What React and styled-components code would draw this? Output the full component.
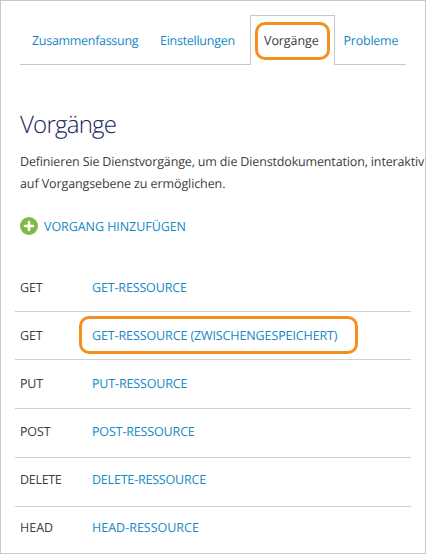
import React from "react";
import styled, { createGlobalStyle } from "styled-components";

const Global = createGlobalStyle`
  * { box-sizing: border-box; }
  body { margin: 0; background: #fff; overflow: hidden; }
`;

const Page = styled.main`
  width: 426px;
  height: 554px;
  overflow: hidden;
  border: 1px solid #c8c8c8;
  font: 12.5px/20px "Open Sans", sans-serif;
  text-rendering: geometricPrecision;
  color: #3c3c3c;
  white-space: nowrap;
`;

const Tabs = styled.nav`
  display: flex;
  height: 50px;
  margin: 14px 19px 0;
`;

const Tab = styled.a`
  flex: 0 0 ${(p) => p.$w}px;
  padding-left: ${(p) => p.$pad}px;
  line-height: 52px;
  color: #1488c6;
  border-bottom: 1px solid #c8c8c8;
`;

const ActiveTab = styled.a`
  display: flex;
  flex: 0 0 85px;
  padding: 6px 0 0 4px;
  border: 1px solid #c8c8c8;
  border-bottom: 0;
`;

const Spaced = styled.span`
  letter-spacing: ${(p) => p.$ls || 0}px;
`;

const TabHighlight = styled.span`
  width: 75px;
  height: 38px;
  padding-left: 6px;
  line-height: 32px;
  border: 3px solid #f68e1f;
  border-radius: 10px;
`;

const Content = styled.section`
  padding: 44px 0 0 19px;
`;

const Title = styled.h1`
  margin: 0;
  font-size: 24px;
  line-height: 32px;
  font-weight: 300;
  letter-spacing: -0.75px;
  color: #14265c;
`;

const Intro = styled.p`
  margin: 10px 0 0;
  line-height: 22px;
`;

const AddLink = styled.a`
  display: flex;
  align-items: center;
  gap: 6px;
  height: 20px;
  margin-top: 22px;
  color: #1488c6;
`;

const List = styled.ul`
  list-style: none;
  margin: 27px 14px 0;
  padding: 0;
`;

const Row = styled.li`
  display: flex;
  height: ${(p) => p.$h}px;
  padding: ${(p) => p.$top}px 0 0 5px;
  border-bottom: 1px solid #d0d0d0;
  &:last-child { border-bottom: 0; }
`;

const Method = styled.span`
  width: 72px;
  letter-spacing: ${(p) => p.$ls}px;
`;

const Link = styled.a`
  color: #1488c6;
  letter-spacing: ${(p) => p.$ls}px;
`;

const HighlightedLink = styled(Link)`
  width: 279px;
  height: 38px;
  margin: -10px 0 0 -13px;
  padding-left: 10px;
  line-height: 34px;
  border: 3px solid #f68e1f;
  border-radius: 10px;
`;

const rows = [
  { method: "GET", h: 48, top: 14, ms: -0.15, ls: -0.15 },
  { method: "GET", h: 48, top: 14, ms: -0.15, ls: -0.11, note: " (ZWISCHENGESPEICHERT)", marked: true },
  { method: "PUT", h: 49, top: 14, ms: -0.2, ls: -0.15 },
  { method: "POST", h: 49, top: 13, ms: -0.15, ls: -0.15 },
  { method: "DELETE", h: 49, top: 12, ms: -0.3, ls: -0.2 },
  { method: "HEAD", h: 46, top: 11, ms: 0, ls: 0 },
];

const IconSvg = styled.svg`
  flex: none;
  margin-bottom: 2px;
`;

const AddIcon = () => (
  <IconSvg width="18" height="18" viewBox="0 0 18 18" aria-hidden="true">
    <circle cx="9" cy="9" r="9" fill="#7fba42" />
    <path d="M9 5v8M5 9h8" stroke="#fff" strokeWidth="2.6" strokeLinecap="round" />
  </IconSvg>
);

export default function App() {
  return (
    <Page>
      <Global />
      <Tabs>
        <Tab $w={129} $pad={12}><Spaced $ls={-0.3}>Zusammenfassung</Spaced></Tab>
        <Tab $w={101} $pad={11}><Spaced $ls={-0.27}>Einstellungen</Spaced></Tab>
        <ActiveTab><TabHighlight><Spaced $ls={-0.07}>Vorgänge</Spaced></TabHighlight></ActiveTab>
        <Tab $w={71} $pad={8.5}><Spaced $ls={-0.23}>Probleme</Spaced></Tab>
      </Tabs>
      <Content>
        <Title>Vorgänge</Title>
        <Intro>
          <Spaced $ls={-0.15}>Definieren Sie Dienstvorgänge, um die Dienstdokumentation, interaktiv</Spaced>
          <br />
          <Spaced $ls={-0.1}>auf Vorgangsebene zu ermöglichen.</Spaced>
        </Intro>
        <AddLink><AddIcon /><Spaced $ls={-0.06}>VORGANG HINZUFÜGEN</Spaced></AddLink>
      </Content>
      <List>
        {rows.map((r, i) => {
          const Target = r.marked ? HighlightedLink : Link;
          return (
            <Row key={i} $h={r.h} $top={r.top}>
              <Method $ls={r.ms}>{r.method}</Method>
              <Target $ls={r.ls}>{r.method}-RESSOURCE{r.note}</Target>
            </Row>
          );
        })}
      </List>
    </Page>
  );
}
